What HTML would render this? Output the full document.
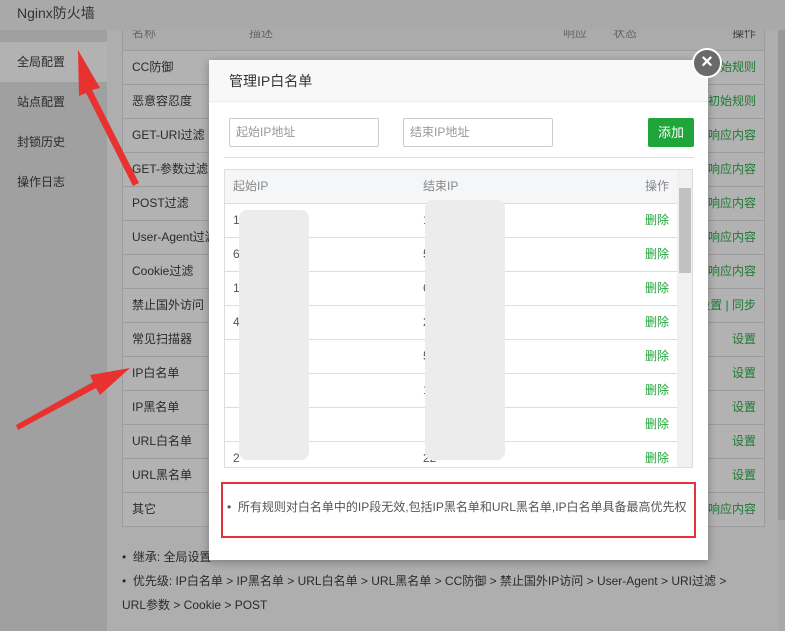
<!DOCTYPE html>
<html><head><meta charset="utf-8"><style>
*{margin:0;padding:0;box-sizing:border-box}
body{width:785px;height:631px;overflow:hidden;background:#a8a8a8;font-family:"Liberation Sans","Noto Sans CJK SC",sans-serif;font-size:12px;color:#333;position:relative}
.abs{position:absolute}
.hdr{left:0;top:0;width:785px;height:30px;background:#a9a9a9;z-index:2}
.side{left:0;top:30px;width:107px;height:601px;background:#a0a0a0}
.side div{height:40px;line-height:40px;padding-left:17px;color:#2a2a2a;font-size:12px}
.side .act{background:#b2b2b2}
.main{left:107px;top:20px;width:671px;height:611px;background:#aeaeae}
.row{position:absolute;left:122px;width:643px;height:34px;border:1px solid #9c9c9c;border-top:none;background:#b2b2b2;line-height:33px;padding-left:9px;color:#2a2a2a}
.row span{position:absolute;right:8px;top:0;color:#1d7a33}
.modal{left:209px;top:60px;width:499px;height:500px;background:#fff;box-shadow:0 2px 8px rgba(0,0,0,.3);z-index:3}
.mt{position:absolute;left:0;top:0;width:499px;height:42px;background:#f8f8f8;border-bottom:1px solid #eee;line-height:42px;padding-left:20px;font-size:14px;color:#333}
.inp{position:absolute;top:58px;height:29px;width:150px;border:1px solid #ccc;border-radius:2px;line-height:27px;padding-left:6px;color:#999}
.btn{position:absolute;left:439px;top:58px;width:46px;height:29px;background:#20a53a;color:#fff;border-radius:2px;text-align:center;line-height:29px;font-size:13px}
.tbl{position:absolute;left:15px;top:109px;width:469px;height:299px;border:1px solid #ddd;overflow:hidden}
.tr{position:absolute;left:0;width:452px;height:34px;border-bottom:1px solid #ddd;line-height:33px}
.tr .a{position:absolute;left:8px;color:#555}.tr .b{position:absolute;left:198px;color:#555}.tr .c{position:absolute;right:8px;color:#20a53a}
.blur{position:absolute;background:#ececec;border-radius:8px}
</style></head><body>
<div class="abs hdr"><div style="position:absolute;left:17px;top:3px;font-size:14px;color:#333">Nginx防火墙</div></div>
<div class="abs side" style="padding-top:12px"><div class="act">全局配置</div><div>站点配置</div><div>封锁历史</div><div>操作日志</div></div>
<div class="abs main"></div>
<div class="row" style="top:17px;background:#ababab;color:#666">名称<b style="position:absolute;left:126px;font-weight:normal">描述</b><b style="position:absolute;left:440px;font-weight:normal">响应</b><b style="position:absolute;left:490px;font-weight:normal">状态</b><span style="color:#444">操作</span></div>
<div class="row" style="top:51px">CC防御<span>初始规则</span></div>
<div class="row" style="top:85px">恶意容忍度<span>初始规则</span></div>
<div class="row" style="top:119px">GET-URI过滤<span>响应内容</span></div>
<div class="row" style="top:153px">GET-参数过滤<span>响应内容</span></div>
<div class="row" style="top:187px">POST过滤<span>响应内容</span></div>
<div class="row" style="top:221px">User-Agent过滤<span>响应内容</span></div>
<div class="row" style="top:255px">Cookie过滤<span>响应内容</span></div>
<div class="row" style="top:289px">禁止国外访问<span>设置 | 同步</span></div>
<div class="row" style="top:323px">常见扫描器<span>设置</span></div>
<div class="row" style="top:357px">IP白名单<span>设置</span></div>
<div class="row" style="top:391px">IP黑名单<span>设置</span></div>
<div class="row" style="top:425px">URL白名单<span>设置</span></div>
<div class="row" style="top:459px">URL黑名单<span>设置</span></div>
<div class="row" style="top:493px">其它<span>响应内容</span></div>
<div class="abs" style="left:122px;top:545px;color:#2a2a2a;line-height:24px;width:640px">• &nbsp;继承: 全局设置<br>• &nbsp;优先级: IP白名单 &gt; IP黑名单 &gt; URL白名单 &gt; URL黑名单 &gt; CC防御 &gt; 禁止国外IP访问 &gt; User-Agent &gt; URI过滤 &gt;<br>URL参数 &gt; Cookie &gt; POST</div>
<div class="abs" style="left:778px;top:20px;width:7px;height:500px;background:#999"></div>
<svg class="abs" style="left:0;top:0;z-index:2" width="785" height="631"><polygon points="78,50 100,88 92,90 139,183 133,186 86,93 79,96" fill="#e8322f"/><polygon points="130,368 100,395 96,388 18,430 16,425 93,382 90,375" fill="#e8322f"/></svg>
<div class="abs modal">
<div class="mt">管理IP白名单</div>
<div class="inp" style="left:20px">起始IP地址</div>
<div class="inp" style="left:194px">结束IP地址</div>
<div class="btn">添加</div>
<div style="position:absolute;left:15px;top:97px;width:470px;height:1px;background:#ddd"></div>
<div class="tbl">
<div class="tr" style="top:0;background:#f5f6f8;width:452px"><span class="a" style="color:#888">起始IP</span><span class="b" style="color:#888">结束IP</span><span class="c" style="color:#888">操作</span></div>
<div class="tr" style="top:34px"><span class="a">1</span><span class="b">1 5</span><span class="c">删除</span></div>
<div class="tr" style="top:68px"><span class="a">6</span><span class="b">5</span><span class="c">删除</span></div>
<div class="tr" style="top:102px"><span class="a">1</span><span class="b">6</span><span class="c">删除</span></div>
<div class="tr" style="top:136px"><span class="a">4 2</span><span class="b">2</span><span class="c">删除</span></div>
<div class="tr" style="top:170px"><span class="a"></span><span class="b">54</span><span class="c">删除</span></div>
<div class="tr" style="top:204px"><span class="a"></span><span class="b">1 4</span><span class="c">删除</span></div>
<div class="tr" style="top:238px"><span class="a"></span><span class="b"></span><span class="c">删除</span></div>
<div class="tr" style="top:272px"><span class="a">2</span><span class="b">22</span><span class="c">删除</span></div>
<div class="blur" style="left:14px;top:40px;width:70px;height:250px"></div>
<div class="blur" style="left:200px;top:30px;width:80px;height:260px"></div>
<div style="position:absolute;left:452px;top:0;width:16px;height:299px;background:#f1f1f1"></div>
<div style="position:absolute;left:454px;top:18px;width:12px;height:85px;background:#c1c1c1"></div>
</div>
<div style="position:absolute;left:12px;top:422px;width:475px;height:56px;border:2px solid #e0333c;padding:14px 0 0 4px;color:#555;font-size:12px">• &nbsp;所有规则对白名单中的IP段无效,包括IP黑名单和URL黑名单,IP白名单具备最高优先权</div>
</div>
<div class="abs" style="left:692px;top:48px;width:30px;height:30px;border-radius:50%;background:#6a6a6a;border:2px solid #fff;color:#fff;font-size:20px;line-height:25px;text-align:center;font-weight:bold;z-index:4">×</div>
</body></html>
